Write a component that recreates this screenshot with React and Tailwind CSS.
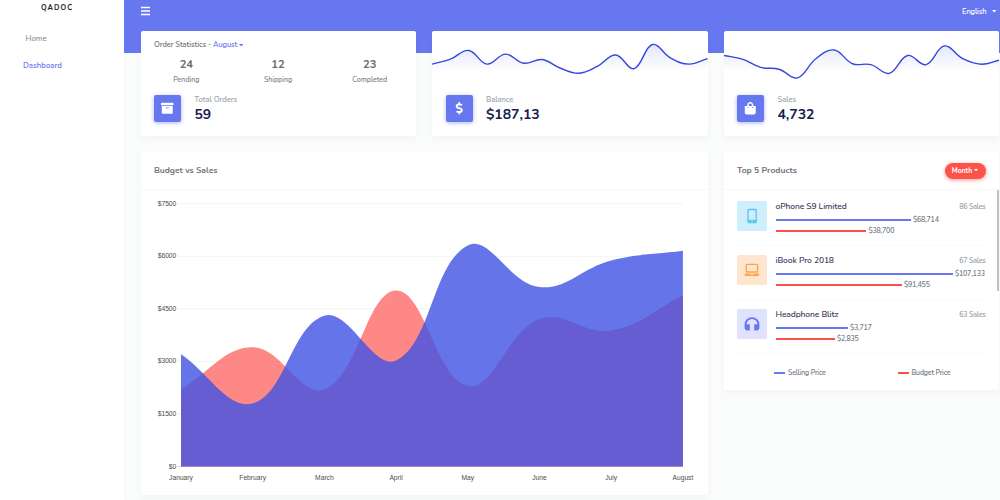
import React from 'react';
import { FaArchive, FaDollarSign, FaShoppingBag } from 'react-icons/fa';

function spline(points, t = 0.4) {
  const cps = points.map((p, i) => {
    const a = points[i - 1] || p;
    const b = points[i + 1] || p;
    const d1 = Math.hypot(p[0] - a[0], p[1] - a[1]);
    const d2 = Math.hypot(b[0] - p[0], b[1] - p[1]);
    const fa = (t * d1) / (d1 + d2);
    const fb = (t * d2) / (d1 + d2);
    return {
      prev: [p[0] - fa * (b[0] - a[0]), p[1] - fa * (b[1] - a[1])],
      next: [p[0] + fb * (b[0] - a[0]), p[1] + fb * (b[1] - a[1])],
    };
  });
  let d = `M${points[0].join(' ')}`;
  for (let i = 1; i < points.length; i++) {
    d += `C${cps[i - 1].next.join(' ')} ${cps[i].prev.join(' ')} ${points[i].join(' ')}`;
  }
  return d;
}

function Caret({ className }) {
  return (
    <svg viewBox="0 0 6 3" className={className} preserveAspectRatio="none" fill="currentColor">
      <path d="M0 0H6L3 3Z" />
    </svg>
  );
}

function Sparkline({ id, data, base, scale }) {
  const line = spline(data.map((v, i) => [i * 18.4, base - v * scale]));
  return (
    <svg viewBox="0 0 276 53" className="block h-[53px] w-full" preserveAspectRatio="none">
      <defs>
        <linearGradient id={id} gradientUnits="userSpaceOnUse" x1="0" y1="0" x2="0" y2="40">
          <stop offset="0" stopColor="#3f52e3" stopOpacity="0.22" />
          <stop offset="1" stopColor="#3f52e3" stopOpacity="0" />
        </linearGradient>
      </defs>
      <path d={`${line}V53H0Z`} fill={`url(#${id})`} />
      <path d={line} fill="none" stroke="#3547dd" strokeWidth="1.4" />
    </svg>
  );
}

function Stat({ icon: Icon, label, value }) {
  return (
    <div className="flex h-[53px] pl-[13.5px] pt-[11.5px]">
      <div className="flex size-[27px] items-center justify-center rounded-[2px] bg-[#6777ef] text-white shadow-[0_1px_4px_#acb5f6]">
        <Icon className="size-[12.5px]" />
      </div>
      <div className="ml-[13.5px]">
        <div className="h-[9px] text-[7.6px] font-semibold leading-[9px] tracking-[-0.05px] text-[#98a6ad]">{label}</div>
        <div className="mt-[3px] text-[14px] font-bold leading-4 tracking-[-0.03px] text-[#191d4d]">{value}</div>
      </div>
    </div>
  );
}

const card = 'rounded-[2px] bg-white shadow-[0_3px_6px_rgba(0,0,0,0.03)]';

const counts = [
  ['24', 'Pending'],
  ['12', 'Shipping'],
  ['23', 'Completed'],
];

function OrderCard() {
  return (
    <section className={`${card} h-[105.5px]`}>
      <div className="flex h-[27px] items-center pl-[13.5px] pt-[1.5px] text-[7.5px] font-semibold text-[#6c757d]">
        <span className="tracking-[-0.07px]">Order Statistics -&nbsp;</span>
        <span className="tracking-[-0.12px] text-[#6777ef]">August</span>
        <Caret className="ml-[2px] h-[2.5px] w-[4.5px] text-[#6777ef]" />
      </div>
      <div className="flex h-[25.5px] text-center">
        {counts.map(([n, label]) => (
          <div key={label} className="w-[91.7px]">
            <div className="text-[11.2px] font-bold leading-[13px] text-[#666d74]">{n}</div>
            <div className="mt-[5px] text-[7px] font-semibold leading-[8px] text-[#7c848c]">{label}</div>
          </div>
        ))}
      </div>
      <Stat icon={FaArchive} label="Total Orders" value="59" />
    </section>
  );
}

const months = ['January', 'February', 'March', 'April', 'May', 'June', 'July', 'August'];
const sales = [3200, 1800, 4305, 3022, 6310, 5120, 5880, 6154];
const budget = [2207, 3403, 2200, 5025, 2302, 4208, 3880, 4880];

function AreaChart() {
  const X = (i) => 40 + i * 71.7;
  const Y = (v) => 276.5 - (v / 7500) * 262.8;
  const area = (data) => `${spline(data.map((v, i) => [X(i), Y(v)]))}V276.5H40Z`;
  return (
    <svg viewBox="0 0 567 305" className="block h-[305px] w-[567px]" fontFamily="Liberation Sans, Arial, sans-serif" fontSize="6.7" fill="#4c4c4c">
      {[0, 1500, 3000, 4500, 6000, 7500].map((v) => (
        <g key={v}>
          <line x1="36" x2="542" y1={Y(v)} y2={Y(v)} stroke={v ? '#f4f4f4' : '#d8d8d8'} strokeWidth="1" />
          <text x="35.3" y={Y(v) + 2} textAnchor="end">{`$${v}`}</text>
        </g>
      ))}
      <path d={area(budget)} fill="#fe5653" fillOpacity="0.7" />
      <path d={area(sales)} fill="#3f52e3" fillOpacity="0.8" />
      {months.map((m, i) => (
        <text key={m} x={X(i)} y="289.8" textAnchor="middle">{m}</text>
      ))}
    </svg>
  );
}

function Phone() {
  return (
    <svg viewBox="0 0 16 16" className="size-4" fill="none" stroke="#57c7f0">
      <rect x="4" y="1.5" width="8.2" height="13" rx="0.8" strokeWidth="1.3" />
      <path d="M4 13.2H12.2" strokeWidth="2.8" />
      <circle cx="8.1" cy="13.2" r="0.7" fill="#cdeefa" stroke="none" />
    </svg>
  );
}

function Laptop() {
  return (
    <svg viewBox="0 0 16 16" className="size-4" fill="none" stroke="#f9a94b">
      <rect x="2.2" y="2.4" width="11.4" height="7.6" rx="0.8" strokeWidth="1.4" />
      <path d="M0.5 11.6H15.3L14.6 14H1.2Z" fill="#f9a94b" stroke="none" />
      <path d="M6 12.3H10" strokeWidth="0.7" stroke="#fde5d0" />
    </svg>
  );
}

function Headphones() {
  return (
    <svg viewBox="0 0 16 16" className="size-4" fill="#6777ef">
      <path d="M8 1.2A7.4 7.4 0 0 0 .6 8.6V11.6A3 3 0 0 0 3.6 14.6H5.8V8.2H2.6A5.4 5.2 0 0 1 13.4 8.2H10.2V14.6H12.4A3 3 0 0 0 15.4 11.6V8.6A7.4 7.4 0 0 0 8 1.2Z" />
    </svg>
  );
}

const products = [
  { name: 'oPhone S9 Limited', sold: '86 Sales', sell: ['$68,714', 135], cost: ['$38,700', 90.5], tile: 'bg-[#cdeefa]', icon: <Phone /> },
  { name: 'iBook Pro 2018', sold: '67 Sales', sell: ['$107,133', 177], cost: ['$91,455', 126], tile: 'bg-[#fde5d0]', icon: <Laptop /> },
  { name: 'Headphone Blitz', sold: '63 Sales', sell: ['$3,717', 72], cost: ['$2,835', 59], tile: 'bg-[#dfe2fe]', icon: <Headphones /> },
];

function Bar({ item, color }) {
  return (
    <div className="flex h-[11.2px] items-center">
      <div className={`h-[2px] ${color}`} style={{ width: item[1] }} />
      <span className="ml-[2.5px] pt-px text-[7.1px] font-semibold leading-none tracking-[-0.22px] text-[#727a82]">{item[0]}</span>
    </div>
  );
}

function Product({ p }) {
  return (
    <div className="mx-[13.5px] flex h-[54px] border-b border-[#f9f9f9] pt-[9px]">
      <div className={`flex size-[30px] shrink-0 items-center justify-center rounded-[2px] ${p.tile}`}>{p.icon}</div>
      <div className="ml-[8.5px] grow">
        <div className="flex h-[14.2px] items-center justify-between">
          <span className="-mt-[3px] text-[8.5px] font-semibold tracking-[-0.12px] text-[#3c4164]">{p.name}</span>
          <span className="-mt-[1px] text-[7.1px] font-semibold tracking-[-0.22px] text-[#98a0a8]">{p.sold}</span>
        </div>
        <Bar item={p.sell} color="bg-[#6777ef]" />
        <Bar item={p.cost} color="bg-[#f9504a]" />
      </div>
    </div>
  );
}

export default function App() {
  return (
    <div className="flex h-[500px] w-[1000px] overflow-hidden bg-[#fafcfb] font-['Nunito','Lato',sans-serif]">
      <aside className="w-[124px] shrink-0 bg-white shadow-[0_0_4px_rgba(0,0,0,0.03)]">
        <div className="pl-[41px] pt-[3px] text-[7.2px] font-bold leading-[10px] tracking-[1.05px] text-[#222]">QADOC</div>
        <nav className="text-[7.8px] leading-[10px]">
          <div className="mt-[21px] pl-[25.5px] font-medium text-[#868e96]">Home</div>
          <div className="mt-[16.5px] pl-[23px] font-semibold text-[#6777ef]">Dashboard</div>
        </nav>
      </aside>
      <main className="w-[876px] shrink-0">
        <header className="flex h-[53px] justify-between bg-[#6777ef] pl-4 pr-1 pt-[5px] text-white">
          <svg viewBox="0 0 10 10" className="mt-[0.5px] h-[10px] w-[10px]" stroke="currentColor" strokeWidth="1.4">
            <path d="M1 1.5H10M1 5H10M1 8.5H10" />
          </svg>
          <div className="mt-px flex h-3 items-center text-[7.5px] font-semibold tracking-[-0.12px]">
            English
            <Caret className="-mt-px ml-[5px] h-[2.5px] w-[4.5px]" />
          </div>
        </header>
        <div className="-mt-[22.5px] grid grid-cols-[275.5px_275.5px_275.5px] gap-4 pl-[16.5px]">
          <OrderCard />
          <section className={`${card} h-[105.5px] overflow-hidden`}>
            <Sparkline id="balance" base={55.9} scale={0.4556} data={[50, 61, 80, 50, 72, 52, 60, 41, 30, 45, 70, 40, 93, 63, 50, 62]} />
            <Stat icon={FaDollarSign} label="Balance" value="$187,13" />
          </section>
          <section className={`${card} h-[105.5px]`}>
            <Sparkline id="sales" base={56.5} scale={0.457} data={[70, 62, 44, 40, 21, 63, 82, 52, 50, 31, 70, 50, 91, 63, 51, 60]} />
            <Stat icon={FaShoppingBag} label="Sales" value="4,732" />
          </section>
        </div>
        <div className="mt-4 flex items-start gap-4 pl-[16.5px]">
          <section className={`${card} h-[343px] w-[567px]`}>
            <h2 className="flex h-[38px] items-center border-b border-[#f7f7f7] pl-[13.5px] text-[8.5px] font-bold text-[#6c757d]">Budget vs Sales</h2>
            <AreaChart />
          </section>
          <section className={`${card} flex h-[238px] w-[275.5px] flex-col`}>
            <div className="flex h-[38px] shrink-0 items-center justify-between border-b border-[#f7f7f7] pl-[13.5px] pr-[13.5px]">
              <h2 className="text-[8.6px] font-bold text-[#6c757d]">Top 5 Products</h2>
              <button className="flex h-4 w-[41px] items-center justify-center rounded-full bg-[#fc544b] text-[6.8px] font-bold leading-4 text-white shadow-[0_1px_4px_#fd9b96]">
                <span>Month</span>
                <Caret className="ml-0.5 h-[2.3px] w-1" />
              </button>
            </div>
            <div className="flex h-[164px] shrink-0">
              <div className="grow pt-[1.5px]">
                {products.map((p) => <Product key={p.name} p={p} />)}
              </div>
              <div className="-ml-[2.5px] h-[101px] w-[2.5px] bg-[#c1c1c1]" />
            </div>
            <div className="flex h-9 items-center pl-[50.5px] pt-[2px] text-[7px] font-semibold leading-[10px] tracking-[-0.18px] text-[#747c84]">
              <div className="flex w-[123.5px] items-center gap-[3px]"><i className="h-[2px] w-[11px] bg-[#6777ef]" />Selling Price</div>
              <div className="flex items-center gap-[3px]"><i className="h-[2px] w-[11px] bg-[#f9504a]" />Budget Price</div>
            </div>
          </section>
        </div>
      </main>
    </div>
  );
}
